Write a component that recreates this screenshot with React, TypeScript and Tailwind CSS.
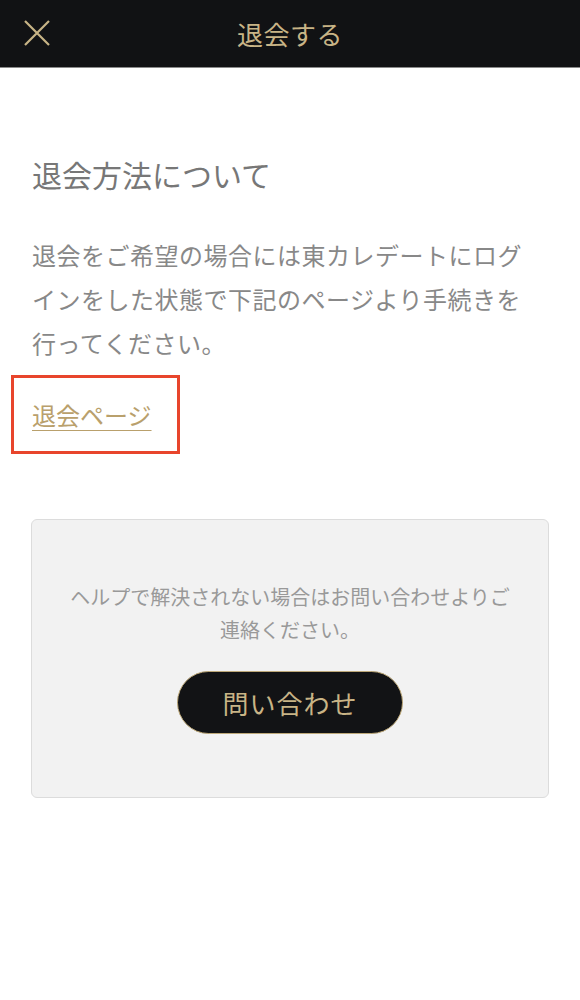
export default function App() {
  return (
    <div
      className="min-h-[1000px] w-[580px] bg-white"
      style={{ fontFamily: '"Noto Sans CJK JP", "Noto Sans", sans-serif' }}
    >
      <header className="relative flex h-[68px] items-center justify-center border-b border-[#8a8a8a] bg-[#111214]">
        <button className="absolute left-[22px] top-[18px] h-[30px] w-[30px]">
          <svg viewBox="0 0 30 30" className="h-[30px] w-[30px]" fill="none" stroke="#c8b486" strokeWidth="2.2">
            <path d="M3 3 L27 27 M27 3 L3 27" />
          </svg>
        </button>
        <h1 className="text-[26px] font-normal tracking-[0.5px] text-[#c8b486]">退会する</h1>
      </header>

      <main className="pl-8 pr-12 pt-[84px]">
        <h2 className="text-[30px] font-normal leading-[44px] text-[#777777]">退会方法について</h2>
        <p className="mt-[37px] text-[24px] leading-[44px] tracking-[0.5px] text-[#888888]">
          退会をご希望の場合には東カレデートにログインをした状態で下記のページより手続きを行ってください。
        </p>
      </main>

      <div className="ml-[11px] mt-[10px] flex h-[79px] w-[169px] items-center border-[3px] border-[#e8452c] pl-[18px]">
        <a href="#" className="text-[24px] leading-[30px] text-[#b9a06c] underline decoration-1 underline-offset-[5px]">
          退会ページ
        </a>
      </div>

      <section className="mx-[31px] mt-[65px] flex h-[279px] flex-col items-center rounded-md border border-[#dcdcdc] bg-[#f2f2f2] pt-[60px]">
        <p className="text-center text-[20px] leading-[33px] text-[#999999]">
          ヘルプで解決されない場合はお問い合わせよりご
          <br />
          連絡ください。
        </p>
        <button className="mt-[25px] flex h-[63px] w-[226px] items-center justify-center rounded-full border border-[#bda878] bg-[#121315] text-[26px] tracking-[1px] text-[#c8b486]">
          問い合わせ
        </button>
      </section>
    </div>
  );
}
